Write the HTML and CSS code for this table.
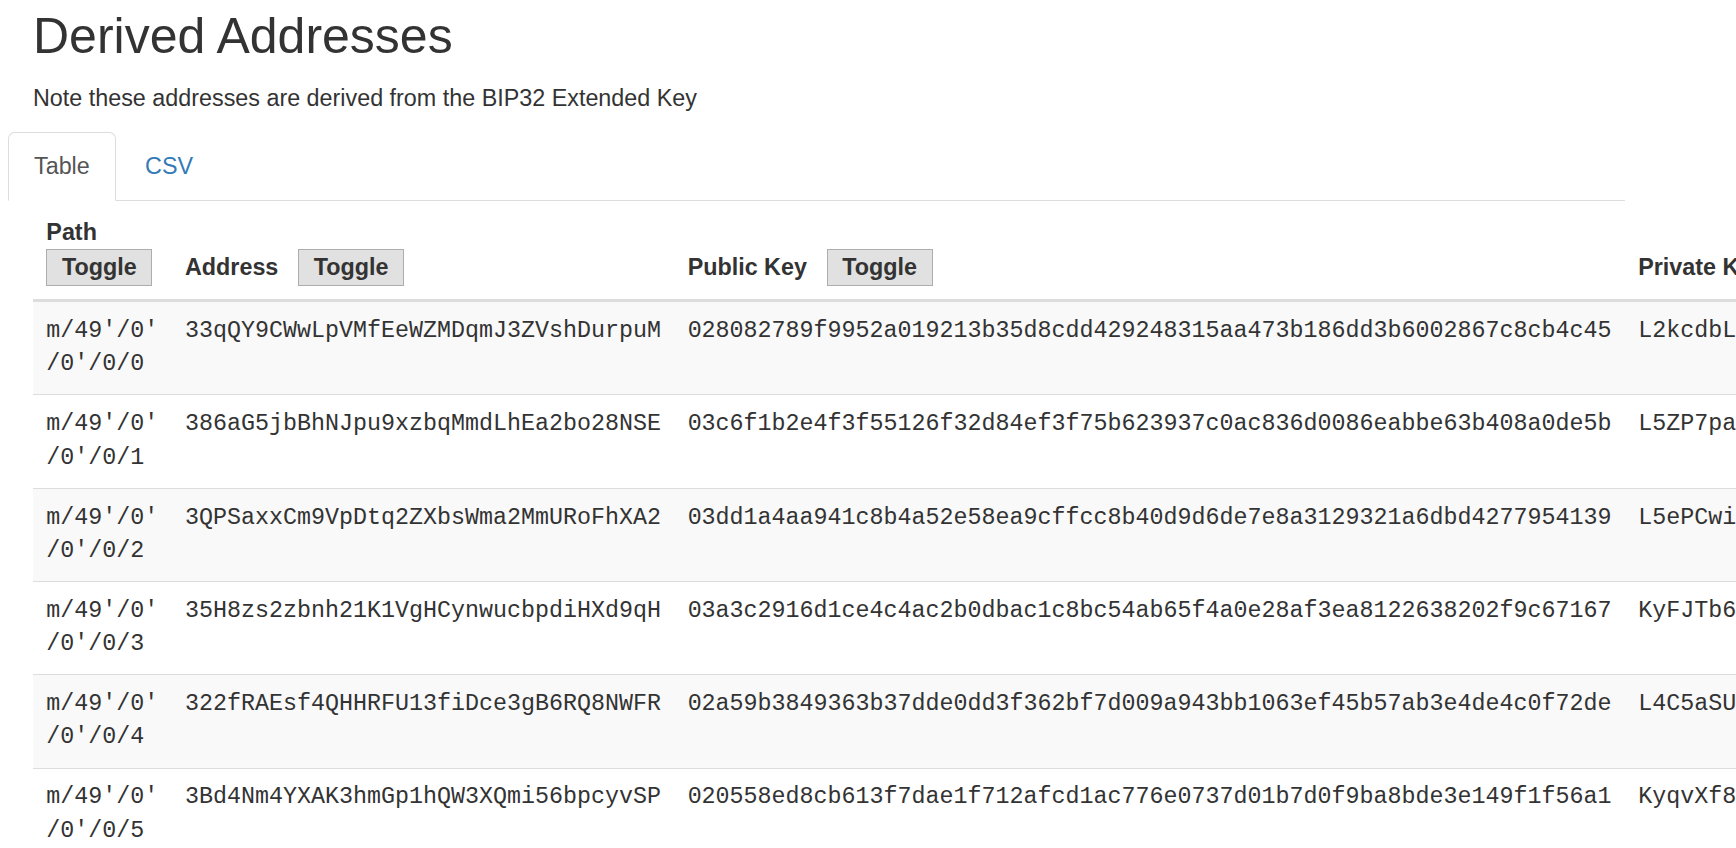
FILE: index.html
```html
<!DOCTYPE html>
<html lang="en">
<head>
<meta charset="utf-8">
<title>Derived Addresses</title>
<link rel="stylesheet" href="styles.css">
</head>
<body>
<div class="container">
  <div class="intro">
    <h2 class="title">Derived Addresses</h2>
    <p class="note">Note these addresses are derived from the BIP32 Extended Key</p>
  </div>
  <ul class="nav-tabs">
    <li class="tab active"><a>Table</a></li>
    <li class="tab"><a class="link">CSV</a></li>
  </ul>
  <div class="tab-content">
    <table class="addresses">
      <thead>
        <tr>
          <th><span class="label">Path</span> <button class="toggle">Toggle</button></th>
          <th><span class="label">Address</span> <button class="toggle">Toggle</button></th>
          <th><span class="label">Public Key</span> <button class="toggle">Toggle</button></th>
          <th class="nowrap"><span class="label">Private Key</span> <button class="toggle">Toggle</button></th>
        </tr>
      </thead>
      <tbody>
        <tr>
          <td class="mono">m/49'/0'<wbr>/0'/0/0</td>
          <td class="mono">33qQY9CWwLpVMfEeWZMDqmJ3ZVshDurpuM</td>
          <td class="mono">028082789f9952a019213b35d8cdd429248315aa473b186dd3b6002867c8cb4c45</td>
          <td class="mono">L2kcdbL</td>
        </tr>
        <tr>
          <td class="mono">m/49'/0'<wbr>/0'/0/1</td>
          <td class="mono">386aG5jbBhNJpu9xzbqMmdLhEa2bo28NSE</td>
          <td class="mono">03c6f1b2e4f3f55126f32d84ef3f75b623937c0ac836d0086eabbe63b408a0de5b</td>
          <td class="mono">L5ZP7pa</td>
        </tr>
        <tr>
          <td class="mono">m/49'/0'<wbr>/0'/0/2</td>
          <td class="mono">3QPSaxxCm9VpDtq2ZXbsWma2MmURoFhXA2</td>
          <td class="mono">03dd1a4aa941c8b4a52e58ea9cffcc8b40d9d6de7e8a3129321a6dbd4277954139</td>
          <td class="mono">L5ePCwi</td>
        </tr>
        <tr>
          <td class="mono">m/49'/0'<wbr>/0'/0/3</td>
          <td class="mono">35H8zs2zbnh21K1VgHCynwucbpdiHXd9qH</td>
          <td class="mono">03a3c2916d1ce4c4ac2b0dbac1c8bc54ab65f4a0e28af3ea8122638202f9c67167</td>
          <td class="mono">KyFJTb6</td>
        </tr>
        <tr>
          <td class="mono">m/49'/0'<wbr>/0'/0/4</td>
          <td class="mono">322fRAEsf4QHHRFU13fiDce3gB6RQ8NWFR</td>
          <td class="mono">02a59b3849363b37dde0dd3f362bf7d009a943bb1063ef45b57ab3e4de4c0f72de</td>
          <td class="mono">L4C5aSU</td>
        </tr>
        <tr>
          <td class="mono">m/49'/0'<wbr>/0'/0/5</td>
          <td class="mono">3Bd4Nm4YXAK3hmGp1hQW3XQmi56bpcyvSP</td>
          <td class="mono">020558ed8cb613f7dae1f712afcd1ac776e0737d01b7d0f9ba8bde3e149f1f56a1</td>
          <td class="mono">KyqvXf8</td>
        </tr>
      </tbody>
    </table>
  </div>
</div>
</body>
</html>
```

FILE: styles.css
```css
html, body {
  margin: 0;
  padding: 0;
  overflow: hidden;
  background: #fff;
}

body {
  font-family: "Liberation Sans", Arial, Helvetica, sans-serif;
  font-size: 23.333px;
  line-height: 33.333px;
  color: #333;
}

.container {
  margin-left: 8px;
  width: 1616.667px;
  padding-top: 9.3px;
}

.intro {
  padding: 0 25px;
}

.title {
  margin: 0 0 17.667px;
  font-size: 50px;
  line-height: 55px;
  font-weight: 500;
  color: #333;
}

.note {
  margin: 0 0 16.667px;
}

.nav-tabs {
  display: flex;
  list-style: none;
  margin: 0;
  padding: 0;
  border-bottom: 1px solid #ddd;
}

.tab {
  margin-bottom: -1px;
  margin-right: 3.333px;
}

.tab a {
  display: block;
  padding: 16.667px 25px;
  border: 1px solid transparent;
  border-radius: 6.667px 6.667px 0 0;
  line-height: 33.333px;
}

.tab.active a {
  color: #555;
  background: #fff;
  border-color: #ddd;
  border-bottom-color: transparent;
}

.tab a.link {
  color: #337ab7;
}

.tab-content {
  padding-left: 25px;
  padding-top: 1px;
}

.addresses {
  border-collapse: collapse;
  border-spacing: 0;
}

.addresses th {
  text-align: left;
  vertical-align: bottom;
  font-weight: bold;
  padding: 14.333px 13.333px 13.333px;
  border-bottom: 3px solid #ddd;
}

.addresses th.nowrap {
  white-space: nowrap;
}

.label {
  margin-right: 13.333px;
}

.toggle {
  font-family: inherit;
  font-size: inherit;
  font-weight: bold;
  line-height: 33.333px;
  color: #333;
  background: #e1e1e1;
  border: 1px solid #adadad;
  border-radius: 0;
  padding: 0.6px 14.6px;
  margin: 0;
  vertical-align: baseline;
}

.addresses td {
  padding: 12.83px 13.333px;
  vertical-align: top;
  border-top: 1px solid #ddd;
}

.addresses tbody tr:nth-child(odd) {
  background: #f9f9f9;
}

.mono {
  font-family: "Liberation Mono", "Courier New", monospace;
}
```
